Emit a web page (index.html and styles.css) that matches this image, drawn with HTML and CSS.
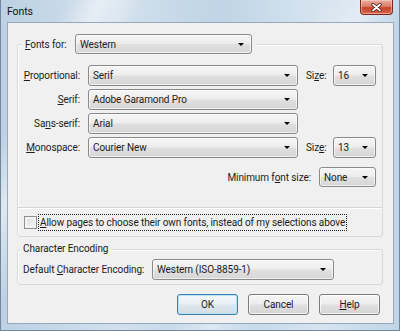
FILE: index.html
```html
<!DOCTYPE html>
<html lang="en">

<head>
    <meta charset="UTF-8" />
    <title>Fonts</title>
    <link rel="stylesheet" href="styles.css">
</head>

<body>
    <div class="window">
        <div class="titlebar">
            <span class="title">Fonts</span>
            <button class="close" aria-label="Close">
                <svg width="11" height="9" viewBox="0 0 11 9">
                    <path d="M2 1.5 L9 7.5 M9 1.5 L2 7.5" stroke="#4a1b10" stroke-width="3.4" stroke-linecap="round" />
                    <path d="M2 1.5 L9 7.5 M9 1.5 L2 7.5" stroke="#fff" stroke-width="1.8" stroke-linecap="round" />
                </svg>
            </button>
        </div>

        <div class="client">
            <fieldset class="group fonts">
                <legend class="caption">
                    <div class="caption-row">
                        <label class="caption-label"><u>F</u>onts for:</label>
                        <div class="menu w-lang"><span>Western</span></div>
                    </div>
                </legend>

                <div class="grid">
                    <label class="lbl"><u>P</u>roportional:</label>
                    <div class="menu"><span>Serif</span></div>
                    <label class="size-lbl">Si<u>z</u>e:</label>
                    <div class="menu"><span>16</span></div>

                    <label class="lbl"><u>S</u>erif:</label>
                    <div class="menu"><span>Adobe Garamond Pro</span></div>

                    <label class="lbl">Sa<u>n</u>s-serif:</label>
                    <div class="menu"><span>Arial</span></div>

                    <label class="lbl"><u>M</u>onospace:</label>
                    <div class="menu"><span>Courier New</span></div>
                    <label class="size-lbl">Siz<u>e</u>:</label>
                    <div class="menu"><span>13</span></div>
                </div>

                <div class="min-row">
                    <label>Minimum f<u>o</u>nt size:</label>
                    <div class="menu w-min"><span>None</span></div>
                </div>

                <hr class="groove">

                <div class="check-row">
                    <span class="checkbox"></span>
                    <span class="focus"><u>A</u>llow pages to choose their own fonts, instead of my selections above</span>
                </div>
            </fieldset>

            <fieldset class="group enc">
                <legend class="enc-caption">Character Encoding</legend>
                <div class="enc-row">
                    <label class="enc-label">Default <u>C</u>haracter Encoding:</label>
                    <div class="menu w-enc"><span>Western (ISO-8859-1)</span></div>
                </div>
            </fieldset>

            <div class="buttons">
                <button class="btn default">OK</button>
                <button class="btn">Cancel</button>
                <button class="btn"><u>H</u>elp</button>
            </div>
        </div>
    </div>
</body>

</html>
```

FILE: styles.css
```css
* {
    box-sizing: border-box;
    margin: 0;
    padding: 0;
}

body {
    width: 400px;
    height: 331px;
    font-family: Roboto, "Open Sans", sans-serif;
    font-size: 10px;
    letter-spacing: -0.1px;
    color: #1c1c1c;
    background: #fff;
}

u {
    text-decoration: underline;
    text-underline-offset: 1px;
}

label,
span {
    white-space: nowrap;
}

.window {
    width: 400px;
    height: 331px;
    display: flex;
    flex-direction: column;
    padding: 0 5px 6px 6px;
    border: 1px solid #71879b;
    border-top: none;
    background:
        linear-gradient(115deg, transparent 0 12%, rgba(255, 255, 255, 0.5) 18%, transparent 26%, transparent 58%, rgba(255, 255, 255, 0.45) 66%, transparent 74%),
        linear-gradient(to right, #bcd1e4, #d2e0ec 30%, #bfd4e6 55%, #d6e4ef 80%, #c0d5e7);
}

/* title bar */
.titlebar {
    height: 22px;
    display: flex;
    align-items: center;
}

.title {
    font-size: 10.5px;
    color: #111;
}

.close {
    margin-left: auto;
    margin-right: 1px;
    align-self: flex-start;
    width: 33px;
    height: 15px;
    display: flex;
    align-items: center;
    justify-content: center;
    border: 1px solid #7a2a1c;
    border-top: none;
    border-radius: 0 0 4px 4px;
    background: linear-gradient(#eab0a2, #dc7d68 45%, #c7442b 55%, #d9654a);
    box-shadow: inset 0 0 0 1px rgba(255, 220, 210, 0.5);
}

/* client area */
.client {
    flex: 1;
    display: flex;
    flex-direction: column;
    background: #f0f0f0;
    border: 1px solid #97a9bb;
}

.group {
    min-width: 0;
    margin: 11px 10px 0 9px;
    border: 1px solid #d3d9de;
    border-radius: 3px;
    box-shadow: inset 1px 1px 0 #fff;
}

.caption {
    margin-left: 4px;
    padding: 0 3px;
    background: #f0f0f0;
}

.caption-row {
    display: flex;
    align-items: center;
    height: 20px;
}

.caption-label {
    width: 50px;
}

/* dropdown lists */
.menu {
    display: flex;
    align-items: center;
    height: 21px;
    padding: 0 7px 0 4px;
    border: 1px solid #8a8a8a;
    border-radius: 3px;
    background: linear-gradient(#f6f6f6, #ededed 48%, #e0e0e0 52%, #d6d6d6);
    box-shadow: inset 0 0 0 1px rgba(255, 255, 255, 0.6);
    white-space: nowrap;
}

.menu::after {
    content: "";
    margin-left: auto;
    border-left: 3px solid transparent;
    border-right: 3px solid transparent;
    border-top: 3px solid #000;
}

.w-lang {
    width: 177px;
    height: 20px;
}

.w-min {
    width: 57px;
    height: 20px;
}

.w-enc {
    width: 182px;
}

.grid {
    display: grid;
    grid-template-columns: 55px 210px 19px 43px;
    grid-auto-rows: 21px;
    column-gap: 8px;
    row-gap: 3px;
    margin-top: 11px;
    padding-left: 7px;
}

.lbl {
    grid-column: 1;
    display: flex;
    align-items: center;
    justify-content: flex-end;
}

.size-lbl {
    display: flex;
    align-items: center;
}

.min-row {
    display: flex;
    justify-content: flex-end;
    align-items: center;
    gap: 8px;
    margin-top: 9px;
    padding-right: 6px;
}

.groove {
    margin-top: 20px;
    border: none;
    border-top: 1px solid #d5d5d5;
    border-bottom: 1px solid #fff;
}

.check-row {
    display: flex;
    align-items: center;
    gap: 1px;
    height: 17px;
    margin: 5px 0 5px;
    padding-left: 6px;
}

.checkbox {
    flex: none;
    width: 13px;
    height: 13px;
    border: 1px solid #8e8f8f;
    background: linear-gradient(135deg, #dcdcdc, #f5f5f5);
    box-shadow: inset 0 0 0 2px #f4f4f4;
}

.focus {
    height: 17px;
    display: flex;
    align-items: center;
    padding: 0 1px;
    border: 1px dotted #222;
}

/* character encoding */
.enc {
    margin-top: 3px;
}

.enc-caption {
    margin-left: 2px;
    padding: 0 3px;
    line-height: 18px;
    background: #f0f0f0;
    color: #1a1a1a;
}

.enc-row {
    display: flex;
    align-items: center;
    margin: 1px 0 4px;
    padding-left: 5px;
}

.enc-label {
    width: 129px;
}

/* buttons */
.buttons {
    display: flex;
    justify-content: flex-end;
    gap: 10px;
    margin-top: 9px;
    padding-right: 13px;
}

.btn {
    width: 61px;
    height: 21px;
    font-family: inherit;
    font-size: 10px;
    letter-spacing: -0.1px;
    color: #1c1c1c;
    border: 1px solid #7b7b7b;
    border-radius: 3px;
    background: linear-gradient(#f6f6f6, #ededed 48%, #e0e0e0 52%, #d4d4d4);
    box-shadow: inset 0 0 0 1px rgba(255, 255, 255, 0.7);
}

.btn.default {
    border-color: #3c7fb1;
    background: linear-gradient(#f4f8fb, #e9f0f5 48%, #dde6ed 52%, #d3dde5);
    box-shadow: inset 0 0 0 1px #b8e1f6;
}
```
